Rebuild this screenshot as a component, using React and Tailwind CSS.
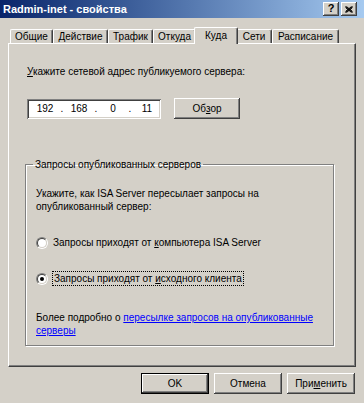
import React from "react";

const raised =
  "shadow-[inset_-1px_-1px_#404040,inset_1px_1px_#ffffff,inset_-2px_-2px_#808080,inset_2px_2px_#d4d0c8]";
const defBtn =
  "shadow-[inset_-1px_-1px_#000000,inset_1px_1px_#000000,inset_-2px_-2px_#404040,inset_2px_2px_#ffffff,inset_-3px_-3px_#808080]";
const sunken =
  "shadow-[inset_1px_1px_#808080,inset_-1px_-1px_#ffffff,inset_2px_2px_#404040,inset_-2px_-2px_#d4d0c8]";

function Tab({ label, w, selected }) {
  if (selected) {
    return (
      <div
        className={`${w} h-[17px] -mx-[2px] -mb-[1px] relative z-10 bg-[#d4d0c8] rounded-t-[2px] border-t border-l border-white border-r border-r-[#404040] shadow-[inset_-1px_0_#808080] flex items-start justify-center pt-[1px]`}
      >
        {label}
      </div>
    );
  }
  return (
    <div
      className={`${w} h-[14px] bg-[#d4d0c8] rounded-t-[2px] border-t border-l border-white border-r border-r-[#404040] shadow-[inset_-1px_0_#808080] flex items-center justify-center`}
    >
      {label}
    </div>
  );
}

function Radio({ checked }) {
  return (
    <div className="w-[12px] h-[12px] rounded-full border border-t-[#808080] border-l-[#808080] border-r-white border-b-white flex items-center justify-center shrink-0">
      <div className="w-[10px] h-[10px] rounded-full bg-white border border-t-[#404040] border-l-[#404040] border-r-[#d4d0c8] border-b-[#d4d0c8] flex items-center justify-center">
        {checked && <div className="w-[4px] h-[4px] rounded-full bg-black" />}
      </div>
    </div>
  );
}

export default function App() {
  return (
    <div className="w-[364px] h-[403px] bg-[#d4d0c8] flex flex-col text-[10px] leading-[13px] text-black font-['Liberation_Sans',Arial,sans-serif] overflow-hidden">
      {/* Title bar */}
      <div className="h-[18px] shrink-0 bg-gradient-to-r from-[#0a246a] to-[#a6caf0] flex items-center pl-[3px] pr-[7px]">
        <span className="text-white font-bold text-[11px]">Radmin-inet - свойства</span>
        <div className="ml-auto flex gap-[2px]">
          <div className={`w-[16px] h-[14px] bg-[#d4d0c8] ${raised} flex items-center justify-center font-bold text-[11px] leading-none pb-[1px]`}>
            ?
          </div>
          <div className={`w-[16px] h-[14px] bg-[#d4d0c8] ${raised} flex items-center justify-center`}>
            <svg width="8" height="7" viewBox="0 0 8 7">
              <path d="M0.5 0.5 L7.5 6.5 M1.5 0.5 L7.5 5.5 M0.5 1.5 L6.5 6.5 M7.5 0.5 L0.5 6.5 M6.5 0.5 L0.5 5.5 M7.5 1.5 L1.5 6.5" stroke="#000" strokeWidth="1" />
            </svg>
          </div>
        </div>
      </div>

      {/* Tabs + panel */}
      <div className="px-[8px] pt-[9px] flex flex-col">
        <div className="flex items-end pl-[2px] h-[16px]">
          <Tab label="Общие" w="w-[43px]" />
          <Tab label="Действие" w="w-[55px]" />
          <Tab label="Трафик" w="w-[45px]" />
          <Tab label="Откуда" w="w-[43px]" />
          <Tab label="Куда" w="w-[44px]" selected />
          <Tab label="Сети" w="w-[36px]" />
          <Tab label="Расписание" w="w-[67px]" />
        </div>
        <div className="h-[324px] border-t border-l border-white border-r border-b border-r-[#404040] border-b-[#404040] shadow-[inset_-1px_-1px_#808080] flex flex-col pl-[18px] pt-[21px]">
          <div>
            <span className="underline">У</span>кажите сетевой адрес публикуемого сервера:
          </div>
          <div className="flex items-center mt-[20px] h-[21px]">
            <div className={`w-[134px] h-[20px] bg-white ${sunken} flex items-center pl-[5px]`}>
              <span className="w-[26px] text-center">192</span>
              <span className="w-[8px] text-center">.</span>
              <span className="w-[26px] text-center">168</span>
              <span className="w-[8px] text-center">.</span>
              <span className="w-[26px] text-center">0</span>
              <span className="w-[8px] text-center">.</span>
              <span className="w-[26px] text-center">11</span>
            </div>
            <div className={`ml-[13px] w-[66px] h-[21px] ${raised} flex items-center justify-center`}>
              Об<span className="underline">з</span>ор
            </div>
          </div>

          <fieldset className="mt-[39px] -ml-[2px] w-[309px] h-[188px] border border-[#808080] shadow-[inset_1px_1px_#ffffff,1px_1px_#ffffff] pl-[10px] pr-[4px]">
            <legend className="-ml-[3px] px-[2px]">Запросы опубликованных серверов</legend>
            <div className="mt-[16px]">
              Укажите, как ISA Server пересылает запросы на
              <br />
              опубликованный сервер:
            </div>
            <div className="flex items-center mt-[23px] h-[13px]">
              <Radio />
              <span className="ml-[5px]">
                Запросы приходят от <span className="underline">к</span>омпьютера ISA Server
              </span>
            </div>
            <div className="flex items-center mt-[22px] h-[15px]">
              <Radio checked />
              <span className="ml-[4px] border border-dotted border-black px-[1px] h-[15px] leading-[13px]">
                Запросы приходят от <span className="underline">и</span>сходного клиента
              </span>
            </div>
            <div className="mt-[25px]">
              Более подробно о{" "}
              <span className="text-[#0000ff] underline">
                пересылке запросов на опубликованные
                <br />
                серверы
              </span>
            </div>
          </fieldset>
        </div>
      </div>

      {/* Bottom buttons */}
      <div className="flex justify-end gap-[5px] pr-[9px] pt-[6px]">
        <div className={`w-[68px] h-[21px] ${defBtn} flex items-center justify-center`}>OK</div>
        <div className={`w-[68px] h-[21px] ${raised} flex items-center justify-center`}>Отмена</div>
        <div className={`w-[68px] h-[21px] ${raised} flex items-center justify-center`}>
          При<span className="underline">м</span>енить
        </div>
      </div>
    </div>
  );
}
